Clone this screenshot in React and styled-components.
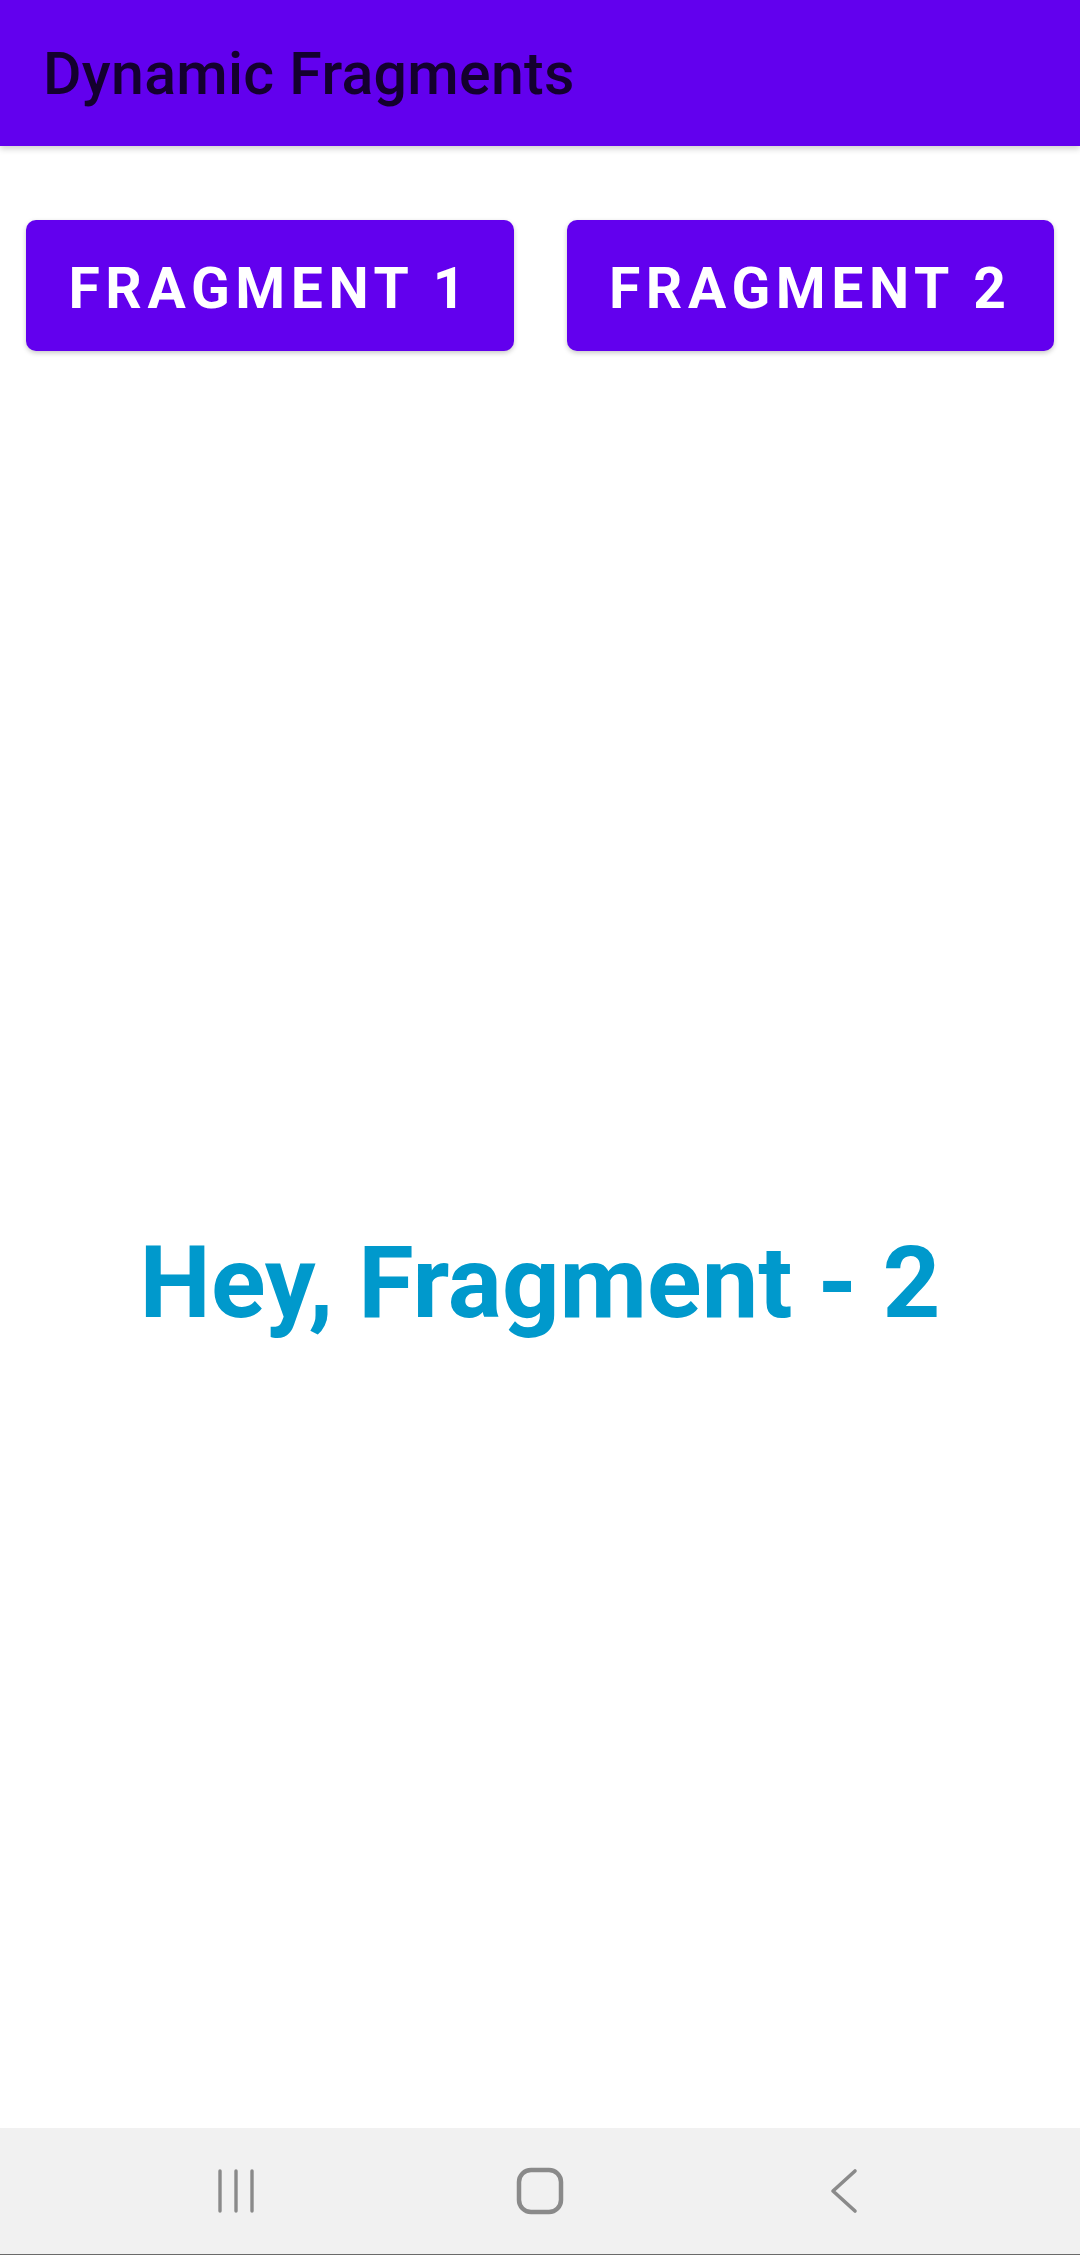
import styled, { createGlobalStyle } from 'styled-components';

const Global = createGlobalStyle`
  html, body {
    margin: 0;
    padding: 0;
    background: #ffffff;
  }
  #root {
    min-height: 2255px;
  }
`;

const Screen = styled.div`
  width: 1080px;
  height: 2255px;
  display: flex;
  flex-direction: column;
  font-family: Roboto, 'Noto Sans', sans-serif;
  background: #ffffff;
`;

const AppBar = styled.header`
  height: 146px;
  flex-shrink: 0;
  background: #6200ee;
  display: flex;
  align-items: center;
  padding-left: 43px;
  box-shadow: 0 3px 6px rgba(0, 0, 0, 0.18);
  position: relative;
  z-index: 1;
`;

const Title = styled.h1`
  margin: 0;
  font-size: 59px;
  font-weight: 500;
  color: #14002e;
  letter-spacing: 0.3px;
`;

const ButtonRow = styled.div`
  display: grid;
  grid-template-columns: 1fr 1fr;
  column-gap: 53px;
  padding: 74px 26px 0 26px;
`;

const FragButton = styled.button`
  height: 131px;
  padding: 6px 0 0 0;
  border: none;
  border-radius: 10px;
  background: #6200ee;
  color: #ffffff;
  font-family: Roboto, 'Noto Sans', sans-serif;
  font-weight: 700;
  font-size: 57px;
  letter-spacing: 5.6px;
  text-transform: uppercase;
  box-shadow: 0 2px 5px rgba(0, 0, 0, 0.22);
  cursor: pointer;
`;

const FragmentHolder = styled.main`
  flex: 1;
  display: flex;
  align-items: center;
  justify-content: center;
  padding-top: 86px;
`;

const Message = styled.p`
  margin: 0;
  font-size: 101px;
  font-weight: 700;
  color: #0099cc;
`;

const NavBar = styled.nav`
  height: 127px;
  flex-shrink: 0;
  background: #f1f1f1;
  border-bottom: 1px solid #6a6a6a;
  display: grid;
  grid-template-columns: repeat(3, 1fr);
  align-items: center;
  justify-items: center;
  padding: 0 84px;
  box-sizing: border-box;
`;

const NavIcon = styled.svg`
  width: 48px;
  height: 48px;
  stroke: #8a8a8a;
  fill: none;
  stroke-linecap: round;
  stroke-linejoin: round;
`;

export default function App() {
  return (
    <>
      <Global />
      <Screen>
        <AppBar>
          <Title>Dynamic Fragments</Title>
        </AppBar>
        <ButtonRow>
          <FragButton>Fragment 1</FragButton>
          <FragButton>Fragment 2</FragButton>
        </ButtonRow>
        <FragmentHolder>
          <Message>Hey, Fragment - 2</Message>
        </FragmentHolder>
        <NavBar>
          <NavIcon viewBox="0 0 48 48" strokeWidth="3.4">
            <line x1="8" y1="4" x2="8" y2="44" />
            <line x1="24" y1="4" x2="24" y2="44" />
            <line x1="40" y1="4" x2="40" y2="44" />
          </NavIcon>
          <NavIcon viewBox="0 0 48 48" strokeWidth="4.5">
            <rect x="3" y="3" width="42" height="42" rx="12" />
          </NavIcon>
          <NavIcon viewBox="0 0 48 48" strokeWidth="3.6">
            <polyline points="35,4 13,24 35,44" />
          </NavIcon>
        </NavBar>
      </Screen>
    </>
  );
}
